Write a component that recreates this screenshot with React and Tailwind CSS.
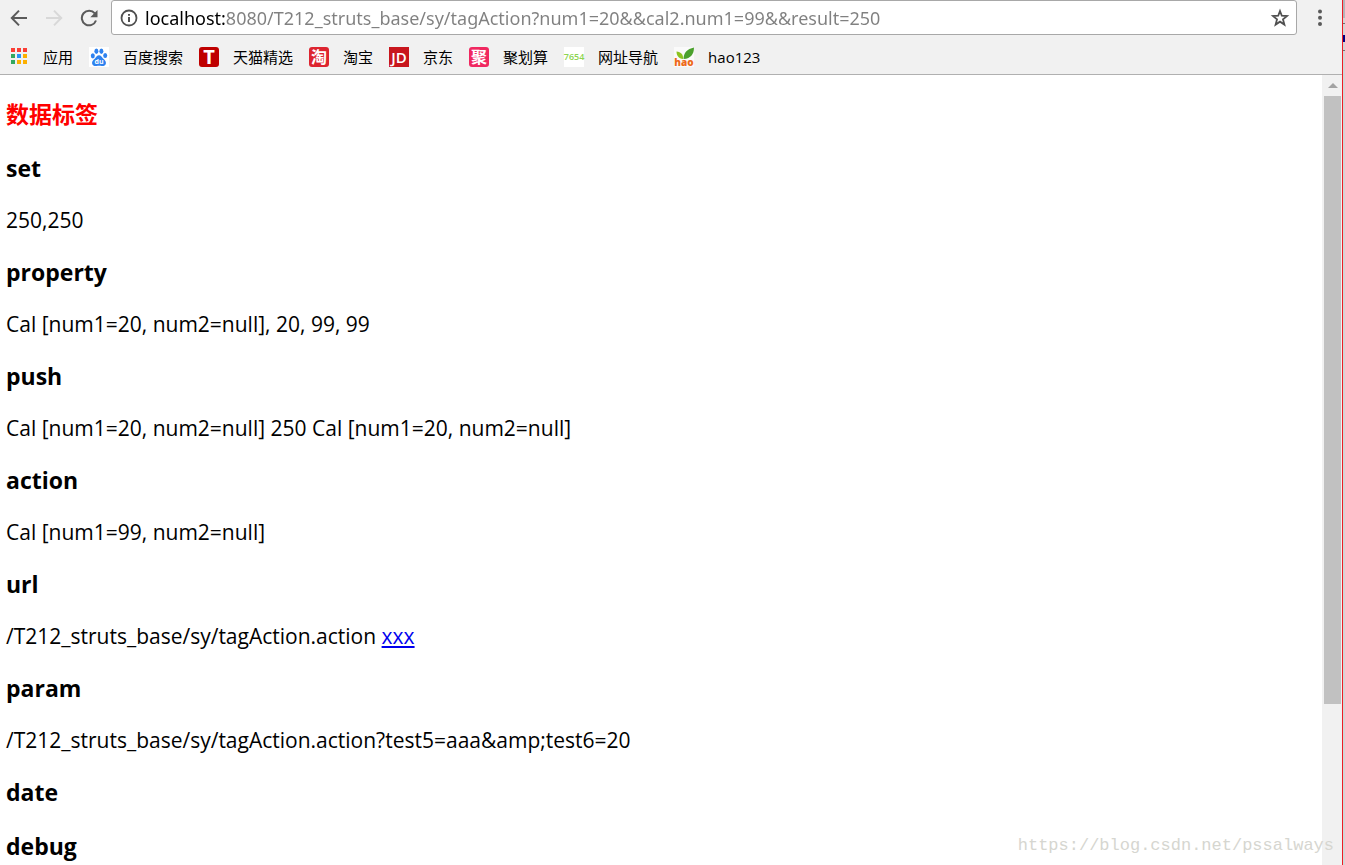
const UI = "font-['Open_Sans','Noto_Sans_CJK_SC',sans-serif]";

function BackIcon({ flip, className }) {
  return (
    <svg width="18" height="18" viewBox="0 0 18 18" className={className} aria-hidden="true">
      <path
        d="M9 1.6 1.8 9 9 16.4M2 9h15"
        fill="none"
        stroke="currentColor"
        strokeWidth="2"
        transform={flip ? 'translate(18 0) scale(-1 1)' : undefined}
      />
    </svg>
  );
}

function ReloadIcon() {
  return (
    <svg width="18" height="18" viewBox="0 0 18 18" aria-hidden="true">
      <path d="M14.800 4.400A7.300 7.300 0 1 0 16 11.500" fill="none" stroke="currentColor" strokeWidth="2" />
      <path d="M17.500 1v7.200h-7.200z" fill="currentColor" />
    </svg>
  );
}

function InfoIcon() {
  return (
    <svg width="18" height="18" viewBox="0 0 18 18" aria-hidden="true">
      <circle cx="9" cy="9" r="7.500" fill="none" stroke="currentColor" strokeWidth="1.800" />
      <path d="M8 8h2v5H8zM8 5h2v1.800H8z" fill="currentColor" />
    </svg>
  );
}

function StarIcon() {
  return (
    <svg width="20" height="20" viewBox="0 0 20 20" aria-hidden="true">
      <path
        d="m10 3 1.800 4.700 5.200.4-4 3.300 1.400 5.200-4.400-2.900-4.400 2.900L7 11.400 3 8.100l5.200-.4z"
        fill="none"
        stroke="currentColor"
        strokeWidth="1.800"
      />
    </svg>
  );
}

function AppsIcon() {
  const colors = ['#fa3e35', '#fa3e35', '#fa3e35', '#34a860', '#2894f8', '#fcb000', '#34a860', '#fcb000', '#fcb000'];
  return (
    <svg width="20" height="20" viewBox="0 0 20 20" aria-hidden="true">
      {colors.map((c, i) => (
        <rect key={i} x={2 + (i % 3) * 6} y={1 + Math.floor(i / 3) * 6} width="4" height="4" fill={c} />
      ))}
    </svg>
  );
}

function BaiduIcon() {
  return (
    <svg width="20" height="20" viewBox="0 0 20 20" aria-hidden="true">
      <rect width="20" height="20" fill="#fff" />
      <g fill="#2e82ef">
        <ellipse cx="3.8" cy="8.8" rx="2" ry="2.6" />
        <ellipse cx="7.4" cy="4.2" rx="2" ry="2.7" />
        <ellipse cx="12.4" cy="4.2" rx="2" ry="2.7" />
        <ellipse cx="16.2" cy="8.6" rx="2" ry="2.5" />
        <path d="M10 8.2c2 0 2.6 1.8 4 3.2 1.700 1.500 3.300 2.600 2.900 5-.4 2.400-2.700 2.700-4.300 2.500-1.700-.3-3.300-.3-5 0-1.700.3-4.100-.1-4.500-2.500-.4-2.300 1.300-3.500 2.900-5C7.400 10 8 8.200 10 8.200z" />
      </g>
      <text x="10" y="17.200" textAnchor="middle" fontSize="7" fontWeight="700" fill="#fff" fontFamily="Open Sans, sans-serif">
        du
      </text>
    </svg>
  );
}

function HaoIcon() {
  return (
    <svg width="20" height="20" viewBox="0 0 20 20" overflow="visible" aria-hidden="true">
      <rect width="20" height="20" fill="#fafafa" />
      <path d="M9.500 12C9.500 6 13 2 20 .5 20 7 17 11.500 9.500 12z" fill="#4aa02c" />
      <path d="M9 12C4.500 11.500 2.500 8.500 2.500 4.500 7 5 9.500 7.500 9 12z" fill="#8cc21f" />
      <text x="10" y="18.500" textAnchor="middle" fontSize="10" fontWeight="800" fill="#ee6a1a" fontFamily="Open Sans, sans-serif">
        hao
      </text>
    </svg>
  );
}

function Badge({ className, children }) {
  return (
    <span className={`flex size-5 items-center justify-center ${className}`} aria-hidden="true">
      {children}
    </span>
  );
}

const bookmarks = [
  { label: '应用', icon: <AppsIcon /> },
  { label: '百度搜索', icon: <BaiduIcon /> },
  { label: '天猫精选', icon: <Badge className="rounded-[3px] bg-[#bf0000] text-xl leading-5 font-bold text-white">T</Badge> },
  { label: '淘宝', icon: <Badge className="rounded-[3px] bg-[#dd2530] text-base leading-5 font-bold text-white">淘</Badge> },
  { label: '京东', icon: <Badge className="bg-[#c8161d] text-[15px] leading-5 font-semibold text-white">JD</Badge> },
  { label: '聚划算', icon: <Badge className="rounded-[3px] bg-[#f02860] text-base leading-5 font-bold text-white">聚</Badge> },
  { label: '网址导航', icon: <Badge className="bg-white text-[9px] leading-5 font-semibold text-[#8cd450]">7654</Badge> },
  { label: 'hao123', icon: <HaoIcon /> },
];

const sections = [
  { title: 'set', body: '250,250' },
  { title: 'property', body: 'Cal [num1=20, num2=null], 20, 99, 99' },
  { title: 'push', body: 'Cal [num1=20, num2=null] 250 Cal [num1=20, num2=null]' },
  { title: 'action', body: 'Cal [num1=99, num2=null]' },
  { title: 'url', body: '/T212_struts_base/sy/tagAction.action', link: 'xxx' },
  { title: 'param', body: '/T212_struts_base/sy/tagAction.action?test5=aaa&amp;test6=20' },
  { title: 'date' },
  { title: 'debug' },
];

function Toolbar() {
  return (
    <div className="flex h-[35px] items-center pl-px">
      <button type="button" aria-label="Back" className="flex w-[35px] justify-center text-[#5a5a5a]">
        <BackIcon />
      </button>
      <button type="button" aria-label="Forward" disabled className="flex w-[35px] justify-center text-[#d8d8d8]">
        <BackIcon flip />
      </button>
      <button type="button" aria-label="Reload" className="flex w-[35px] justify-center text-[#5a5a5a]">
        <ReloadIcon />
      </button>
      <div className="ml-[5px] flex h-[35px] min-w-0 flex-1 items-center rounded-[3px] border border-[#a8a8a8] bg-white pl-2 pr-[6px] text-[#505050]">
        <InfoIcon />
        <input
          type="text"
          aria-label="Address"
          defaultValue="localhost:8080/T212_struts_base/sy/tagAction?num1=20&&cal2.num1=99&&result=250"
          className="ml-[7px] min-w-0 flex-1 bg-[linear-gradient(to_right,#000_80px,#808080_80px)] bg-clip-text font-['Noto_Sans',sans-serif] text-lg text-transparent outline-none"
        />
        <button type="button" aria-label="Bookmark this page">
          <StarIcon />
        </button>
      </div>
      <button type="button" aria-label="Menu" className="flex w-[45px] justify-center text-[#5a5a5a]">
        <svg width="4" height="18" viewBox="0 0 4 18" fill="currentColor" aria-hidden="true">
          <circle cx="2" cy="2.500" r="2" />
          <circle cx="2" cy="8.700" r="2" />
          <circle cx="2" cy="15" r="2" />
        </svg>
      </button>
    </div>
  );
}

function NeighbourWindow() {
  return (
    <div className="flex w-[3px] shrink-0 flex-col border-l border-[#ed1c24] bg-[#d4d4d4]" aria-hidden="true">
      <div className="h-[18px] bg-[#b4b4b8]" />
      <div className="h-[5px]" />
      <div className="h-px bg-[#707070]" />
      <div className="h-[11px]" />
      <div className="h-[7px] bg-[#000080]" />
      <div className="h-2" />
      <div className="h-px bg-[#707070]" />
    </div>
  );
}

export default function App() {
  return (
    <div className={`relative flex h-screen overflow-hidden bg-white text-black ${UI}`}>
      <div className="flex min-w-0 flex-1 flex-col">
        <header className="shrink-0 border-b border-[#b0b0b0] bg-[#f1f1f1]">
          <Toolbar />
          <nav className="flex h-[39px] items-center gap-4 pl-[9px] pt-1">
            {bookmarks.map((b) => (
              <a key={b.label} href="#" className="flex items-center gap-[14px] whitespace-nowrap text-[15px] leading-5">
                <span className="shrink-0">{b.icon}</span>
                {b.label}
              </a>
            ))}
          </nav>
        </header>
        <div className="flex min-h-0 flex-1">
          <main className="min-w-0 flex-1 overflow-hidden pl-[6px] pt-[23px]">
            <h1 className="text-[23px] font-bold leading-8 text-[#ff0000]">数据标签</h1>
            {sections.map((s) => (
              <section key={s.title}>
                <h2 className="mt-[22px] text-[23px] font-bold leading-8">{s.title}</h2>
                {s.body && (
                  <p className="mt-[22px] text-[21px] leading-7">
                    {s.body}
                    {s.link && (
                      <>
                        {' '}
                        <a href="#" className="text-[#0000ee] underline">
                          {s.link}
                        </a>
                      </>
                    )}
                  </p>
                )}
              </section>
            ))}
          </main>
          <div className="flex w-5 shrink-0 flex-col bg-[#f1f1f1] pl-[2px] pr-px" aria-hidden="true">
            <div className="flex h-[21px] items-center justify-center">
              <svg width="10" height="5" viewBox="0 0 10 5">
                <path d="M5 0l5 5H0z" fill="#a3a3a3" />
              </svg>
            </div>
            <div className="h-[77%] bg-[#c1c1c1]" />
          </div>
        </div>
      </div>
      <NeighbourWindow />
      <p className="absolute bottom-[7px] right-[11px] font-['Liberation_Mono',monospace] text-[17px] leading-6 text-[#d6d6d0]">
        https://blog.csdn.net/pssalways
      </p>
    </div>
  );
}
